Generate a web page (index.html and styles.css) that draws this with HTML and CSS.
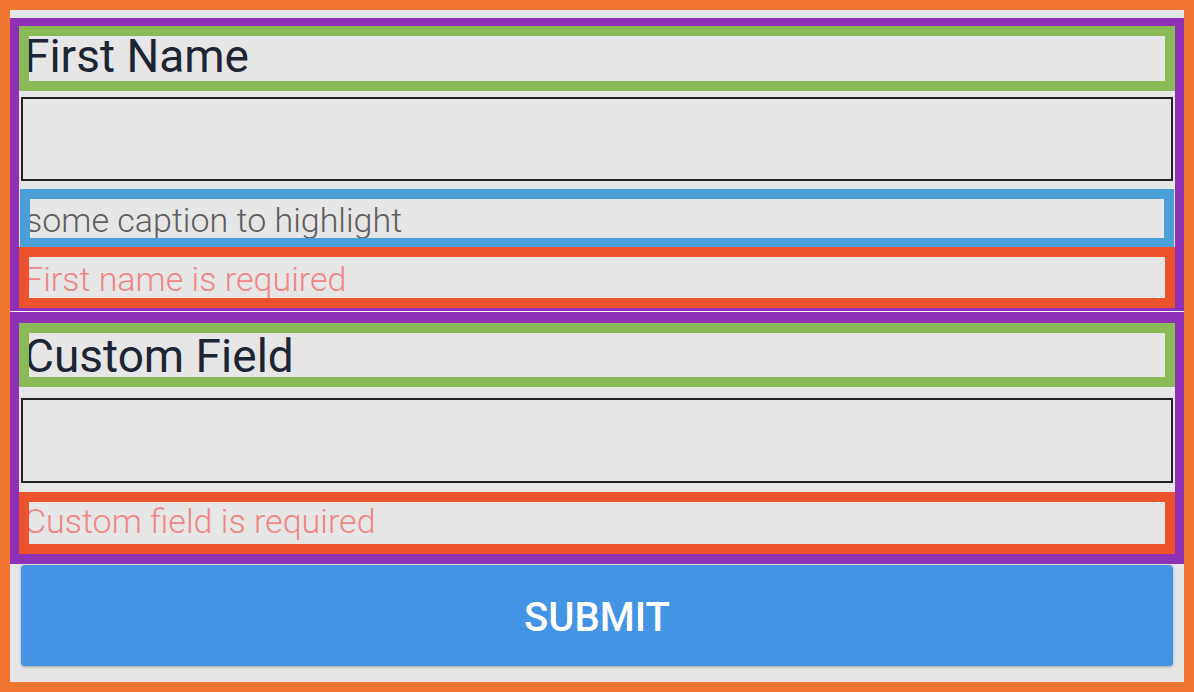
FILE: index.html
```html
<!DOCTYPE html>
<html lang="en">
<head>
<meta charset="utf-8">
<title>Form</title>
<link rel="stylesheet" href="styles.css">
</head>
<body>
<div class="frame">
  <div class="field field--first">
    <div class="label-box label-box--first"><div class="label label--first">First Name</div></div>
    <div class="input input--first"></div>
    <div class="caption-box"><div class="caption">some caption to highlight</div></div>
    <div class="error-box error-box--first"><div class="error error--first">First name is required</div></div>
  </div>
  <div class="separator"></div>
  <div class="field field--second">
    <div class="label-box label-box--second"><div class="label label--second">Custom Field</div></div>
    <div class="input input--second"></div>
    <div class="error-box error-box--second"><div class="error error--second">Custom field is required</div></div>
  </div>
  <button class="submit" type="button">SUBMIT</button>
</div>
</body>
</html>
```

FILE: styles.css
```css
* { box-sizing: border-box; }

html, body {
  margin: 0;
  padding: 0;
  background: #e6e6e6;
}

body {
  font-family: Roboto, "Noto Sans", "Liberation Sans", sans-serif;
  width: 1194px;
  height: 692px;
  overflow: hidden;
}

.frame {
  width: 1194px;
  height: 692px;
  border: 10px solid #f07530;
  padding-top: 8px;
  display: flex;
  flex-direction: column;
}

.field {
  border-style: solid;
  border-color: #8e31b6;
  display: flex;
  flex-direction: column;
}

.field--first { border-width: 8px 9px 3px 9px; }
.field--second { border-width: 11px 9px 10px 9px; }

.separator {
  height: 1px;
  background: #ffffff;
  margin: 0 1px;
}

.label-box {
  border: 10px solid #89ba55;
}
.label-box--first { height: 65px; margin-bottom: 6px; }
.label-box--second { height: 64px; margin-bottom: 11px; }

.label {
  height: 100%;
  overflow: hidden;
  white-space: nowrap;
  text-indent: -5px;
  font-size: 46px;
  font-weight: 400;
  color: #1d2433;
}
.label--first { line-height: 41px; }
.label--second { line-height: 46px; }

.input {
  border: 2px solid #222222;
  margin: 0 2px;
}
.input--first { height: 84px; margin-bottom: 8px; }
.input--second { height: 85px; margin-bottom: 9px; }

.caption-box {
  height: 58px;
  margin: 0 1px;
  border-style: solid;
  border-color: #4aa0d6;
  border-width: 10px 10px 9px 10px;
}

.caption {
  height: 100%;
  overflow: hidden;
  white-space: nowrap;
  text-indent: -5px;
  font-family: "Roboto Light", Roboto, "Noto Sans", sans-serif;
  font-size: 34px;
  font-weight: 300;
  line-height: 43px;
  color: #5e5e5e;
}

.error-box {
  border: 10px solid #ec522e;
}
.error-box--first { height: 61px; }
.error-box--second { height: 62px; }

.error {
  height: 100%;
  overflow: hidden;
  white-space: nowrap;
  text-indent: -5px;
  font-family: "Roboto Light", Roboto, "Noto Sans", sans-serif;
  font-size: 34px;
  font-weight: 300;
  color: #f08585;
}
.error--first { line-height: 45px; }
.error--second { line-height: 38px; }

.submit {
  margin: 1px 11px 0 11px;
  height: 101px;
  border: none;
  border-radius: 4px;
  background: #4394e5;
  box-shadow: 0 1px 3px rgba(0, 0, 0, 0.3);
  color: #ffffff;
  font-family: Roboto, "Noto Sans", "Liberation Sans", sans-serif;
  font-size: 40px;
  font-weight: 500;
  line-height: 1;
  padding: 4px 0 0 0;
  cursor: pointer;
}
```
